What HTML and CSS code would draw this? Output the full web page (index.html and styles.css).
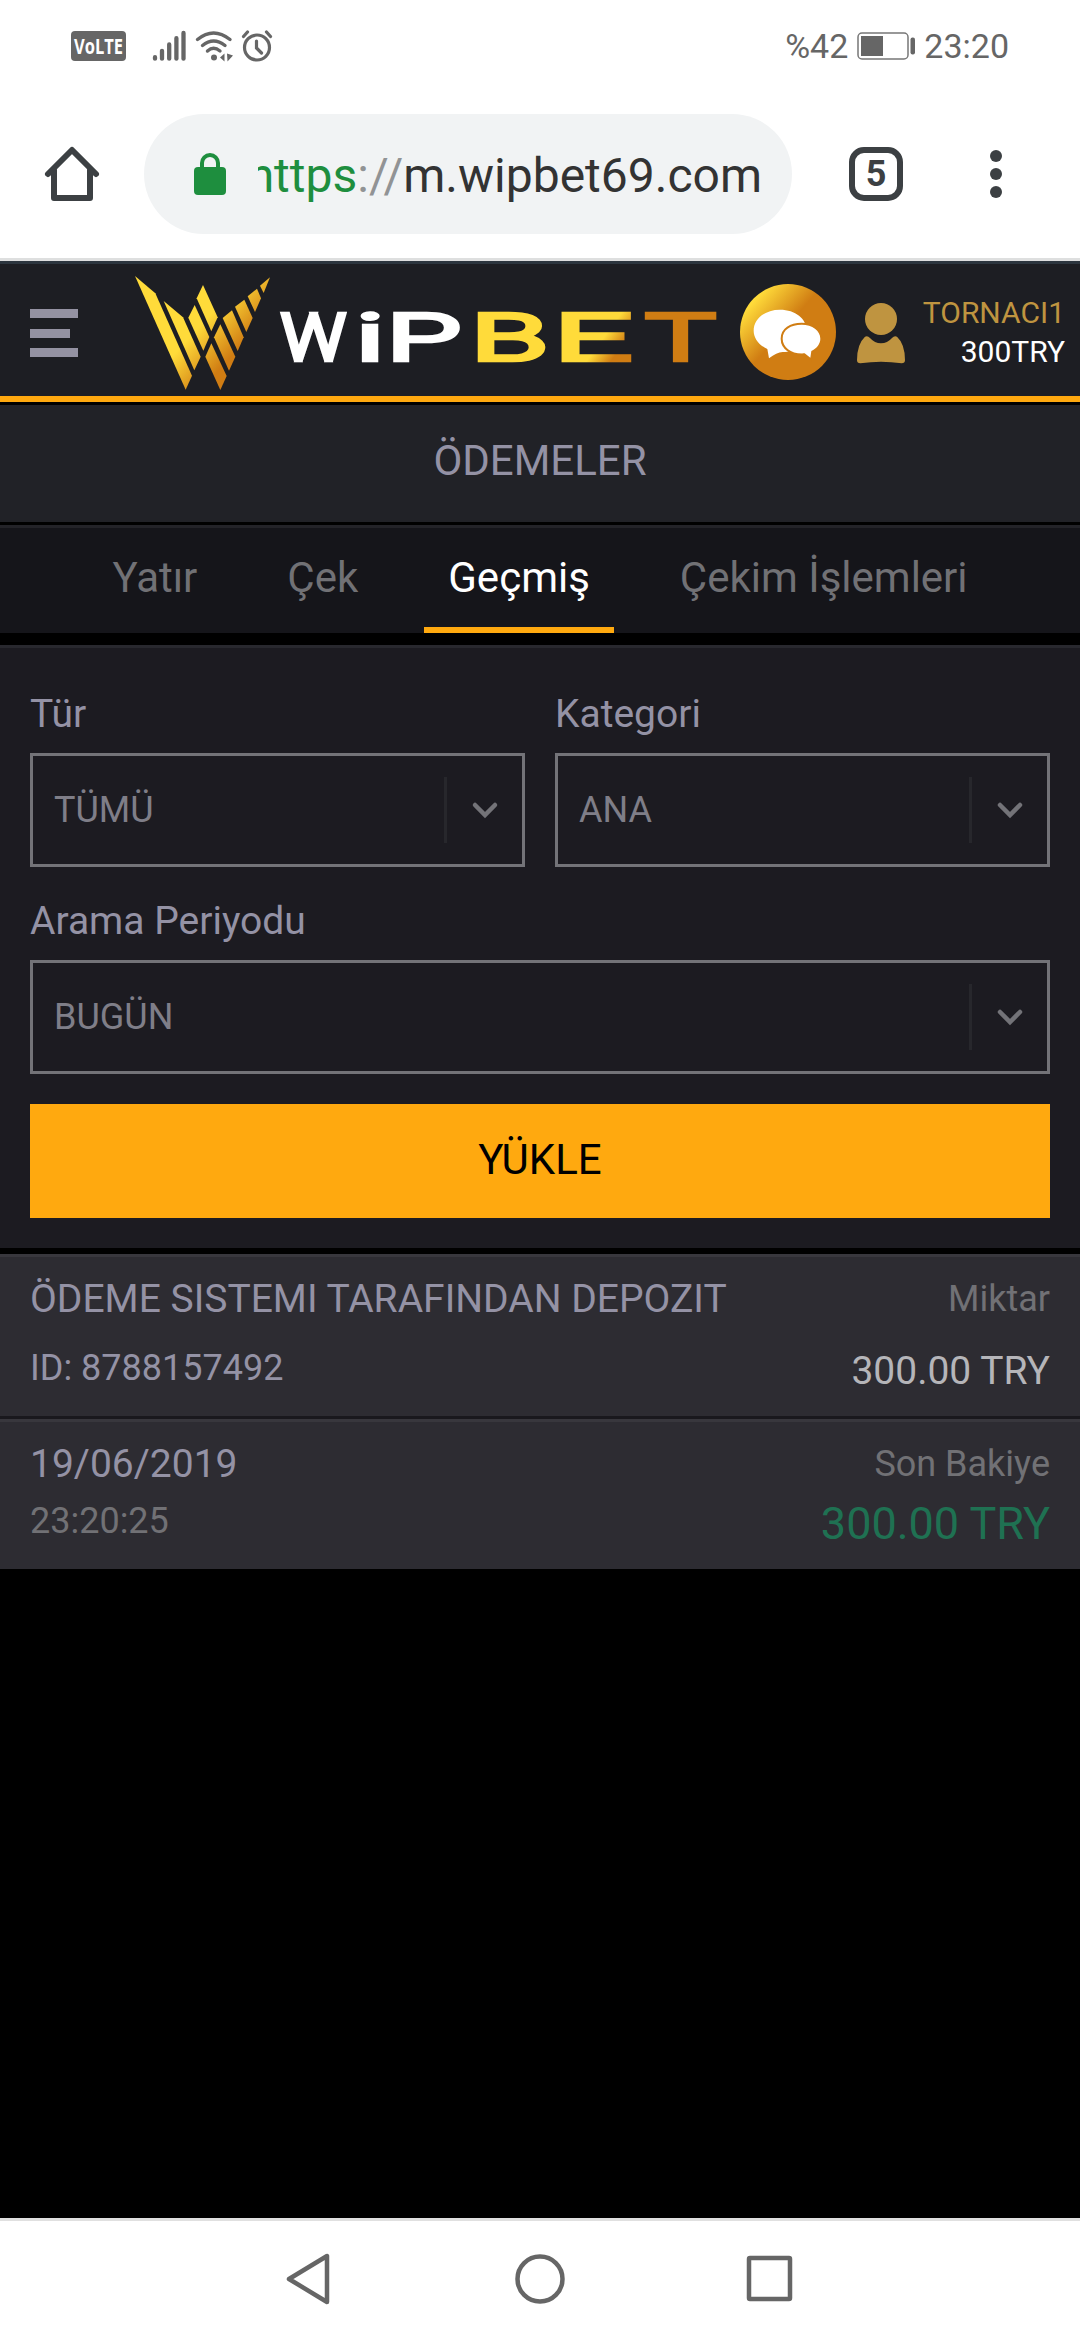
FILE: index.html
```html
<!DOCTYPE html>
<html lang="tr">
<head>
    <meta charset="UTF-8">
    <meta name="viewport" content="width=device-width, initial-scale=1.0">
    <title>Ödemeler</title>
    <link rel="stylesheet" href="styles.css">
</head>
<body>
    <div class="status-bar">
        <div class="status-left">
            <svg class="volte" width="55" height="30" viewBox="0 0 55 30">
                <rect width="55" height="30" rx="4" fill="#666"/>
                <text x="3" y="23" textLength="49" lengthAdjust="spacingAndGlyphs">VoLTE</text>
            </svg>
            <svg class="signal" width="35" height="32" viewBox="0 0 35 32" stroke="#666" stroke-width="4.3" stroke-linecap="round">
                <path d="M3 27.2v1.5M10 20.8v7.9M17.2 14.4v14.3M24.4 8.2v20.5M31.5 3v25.7"/>
            </svg>
            <svg class="wifi" width="38" height="32" viewBox="0 0 38 32" fill="none" stroke="#666" stroke-width="3.4" stroke-linecap="round">
                <path d="M2.5 9.5Q18.5-3.5 35 9.5M7.5 15.5Q18.5 6.5 30 15.5M12.5 21Q18.5 15.7 25 21"/>
                <circle cx="19" cy="27.5" r="3" fill="#666" stroke="none"/>
                <path d="M25 27.5l4.5-4v8zM32 23.5l6 2-5.5 6z" fill="#666" stroke="none"/>
            </svg>
            <svg class="alarm" width="32" height="32" viewBox="0 0 32 32" fill="none" stroke="#666" stroke-width="3.2" stroke-linecap="round">
                <circle cx="16" cy="17.5" r="12.5"/>
                <path d="M15.5 11v7l5 5M2.5 6.5l4-4.5M29.5 6.5l-4-4.5"/>
            </svg>
        </div>
        <div class="status-right">
            <span>%42</span>
            <svg width="58" height="28" viewBox="0 0 58 28">
                <rect x="1" y="1" width="50" height="26" rx="4" fill="none" stroke="#777" stroke-width="1.5"/>
                <rect x="4" y="4" width="22" height="20" fill="#666"/>
                <rect x="53.5" y="5.5" width="4.5" height="17" rx="2" fill="#666"/>
            </svg>
            <span>23:20</span>
        </div>
    </div>

    <div class="browser-bar">
        <svg class="home" width="54" height="54" viewBox="0 0 54 54" fill="none" stroke="#3c4043" stroke-width="6" stroke-linejoin="round" stroke-linecap="round">
            <path d="M3 27L27 3l24 24M9 23v28h36V23"/>
        </svg>
        <div class="url-box">
            <svg width="32" height="42" viewBox="0 0 32 42">
                <rect y="14" width="32" height="28" rx="4" fill="#1e8e3e"/>
                <path d="M8 16V10a8 8 0 0 1 16 0v6" fill="none" stroke="#1e8e3e" stroke-width="4"/>
            </svg>
            <div class="url"><span class="scheme">https</span><span class="slashes">://</span>m.wipbet69.com</div>
        </div>
        <div class="tab-count">5</div>
        <div class="dots"><i></i><i></i><i></i></div>
    </div>

    <header class="site-header">
        <div class="menu"><i></i><i class="short"></i><i></i></div>
        <svg class="logo" width="585" height="128" viewBox="405 39 1755 384">
            <defs>
                <linearGradient id="gold" gradientUnits="userSpaceOnUse" x1="550" y1="268" x2="646" y2="356">
                    <stop offset="0" stop-color="#ffdb3a"/>
                    <stop offset="1" stop-color="#d07d13"/>
                </linearGradient>
                <linearGradient id="gold-e" x1="0.3" y1="0.3" x2="1" y2="0.8">
                    <stop offset="0.45" stop-color="#ffdb3a"/>
                    <stop offset="0.75" stop-color="#d07d13"/>
                </linearGradient>
            </defs>
            <g fill="url(#gold)">
                <polygon points="405,63 466,115 576,362 557,404"/>
                <polygon points="491,138 549,187 602,305 583,346"/>
                <polygon points="584,150 628,246 610,287 565,188"/>
                <polygon points="609,90 653,187 634,229 590,130"/>
                <polygon points="634,265 680,363 661,405 616,305"/>
                <polygon points="661,208 706,305 687,347 642,247"/>
                <polygon points="696,166 731,247 713,288 668,189"/>
                <polygon points="733,134 758,189 739,231 705,155"/>
                <polygon points="771,101 783,130 765,171 743,124"/>
                <polygon points="810,67 791,114 780,92"/>
            </g>
            <g class="wordmark">
                <text x="843" y="316" textLength="194" lengthAdjust="spacingAndGlyphs" fill="#fff" stroke="#fff">W</text>
                <text x="1068" y="316" textLength="84" lengthAdjust="spacingAndGlyphs" fill="#fff" stroke="#fff">i</text>
                <text x="1160" y="316" textLength="222" lengthAdjust="spacingAndGlyphs" fill="#fff" stroke="#fff">P</text>
                <text x="1413" y="316" textLength="230" lengthAdjust="spacingAndGlyphs" fill="#ffdb3a" stroke="#ffdb3a">B</text>
                <text x="1663" y="316" textLength="231" lengthAdjust="spacingAndGlyphs" fill="url(#gold-e)" stroke="url(#gold-e)">E</text>
                <text x="1938" y="316" textLength="207" lengthAdjust="spacingAndGlyphs" fill="#d07d13" stroke="#d07d13">T</text>
            </g>
        </svg>
        <svg class="chat" width="96" height="96" viewBox="60 87 288 288">
            <defs>
                <linearGradient id="chat-gold" x1="0.12" y1="0.12" x2="0.55" y2="0.5">
                    <stop offset="0.1" stop-color="#ffdb3a"/>
                    <stop offset="0.85" stop-color="#d07d13"/>
                </linearGradient>
            </defs>
            <circle cx="204" cy="231" r="144" fill="url(#chat-gold)"/>
            <path d="M180 164c46 0 80 27 80 63s-30 64-72 64c-12 0-26 8-41 19l-5-28c-25-12-41-32-41-55 0-36 34-63 79-63z" fill="#fff"/>
            <path d="M245 209c32 0 56 18 56 42 0 16-11 29-27 37l-3 20-17-13c-39 3-66-17-66-44s24-42 57-42z" fill="#fff" stroke="#d07d13" stroke-width="12" paint-order="stroke"/>
        </svg>
        <svg class="person" width="48" height="60" viewBox="0 0 144 180" fill="#bf9440">
            <circle cx="72" cy="48" r="48"/>
            <path d="M24 101q8-4 15 4 14 16 33 16t33-16q7-8 15-4 24 22 24 71 0 9-10 9-31-5-62-5t-62 5q-10 0-10-9 0-49 24-71z"/>
        </svg>
        <div class="account">
            <div class="user-name">TORNACI1</div>
            <div class="user-balance">300TRY</div>
        </div>
    </header>

    <h1 class="page-title">ÖDEMELER</h1>

    <nav class="tabs">
        <a>Yatır</a>
        <a>Çek</a>
        <a class="active">Geçmiş</a>
        <a>Çekim İşlemleri</a>
    </nav>

    <section class="filters">
        <div class="filter-row">
            <div class="field">
                <label>Tür</label>
                <div class="select">TÜMÜ
                    <span class="arrow"><svg width="26" height="16" viewBox="0 0 26 16"><path d="M3 3l10 10L23 3"/></svg></span>
                </div>
            </div>
            <div class="field">
                <label>Kategori</label>
                <div class="select">ANA
                    <span class="arrow"><svg width="26" height="16" viewBox="0 0 26 16"><path d="M3 3l10 10L23 3"/></svg></span>
                </div>
            </div>
        </div>
        <div class="field">
            <label>Arama Periyodu</label>
            <div class="select">BUGÜN
                <span class="arrow"><svg width="26" height="16" viewBox="0 0 26 16"><path d="M3 3l10 10L23 3"/></svg></span>
            </div>
        </div>
        <div class="load-button">YÜKLE</div>
    </section>

    <section class="history">
        <div class="entry entry-main">
            <div>
                <div class="entry-title">ÖDEME SISTEMI TARAFINDAN DEPOZIT</div>
                <div class="entry-id">ID: 8788157492</div>
            </div>
            <div class="right">
                <div class="caption">Miktar</div>
                <div class="amount">300.00 TRY</div>
            </div>
        </div>
        <div class="entry entry-date">
            <div>
                <div class="entry-title">19/06/2019</div>
                <div class="time">23:20:25</div>
            </div>
            <div class="right">
                <div class="caption">Son Bakiye</div>
                <div class="balance">300.00 TRY</div>
            </div>
        </div>
    </section>

    <div class="nav-bar">
        <svg width="50" height="54" viewBox="0 0 50 54"><path d="M4 27L42 4v46z"/></svg>
        <svg width="50" height="54" viewBox="0 0 50 54"><circle cx="25" cy="27" r="22.5"/></svg>
        <svg width="50" height="54" viewBox="0 0 50 54"><rect x="4" y="6" width="41" height="41" rx="1"/></svg>
    </div>
</body>
</html>
```

FILE: styles.css
```css
* {
    box-sizing: border-box;
}
body {
    margin: 0;
    height: 2340px;
    display: flex;
    flex-direction: column;
    background: #000;
    font-family: Roboto, "Liberation Sans", sans-serif;
    overflow: hidden;
}
svg {
    display: block;
    flex: none;
    overflow: visible;
}

/* phone status bar */
.status-bar {
    height: 90px;
    padding: 2px 71px 0 71px;
    display: flex;
    justify-content: space-between;
    align-items: center;
    background: #fff;
    color: #666;
    font-size: 34px;
}
.status-left,
.status-right {
    display: flex;
    align-items: center;
}
.status-right {
    gap: 9px;
}
.volte text {
    font: bold 22px "Open Sans", sans-serif;
    fill: #fff;
}
.signal {
    margin-left: 26px;
}
.wifi {
    margin-left: 8px;
}
.alarm {
    margin-left: 8px;
}

/* browser toolbar */
.browser-bar {
    height: 171px;
    padding-left: 45px;
    display: flex;
    align-items: center;
    background: #fff;
    border-bottom: 3px solid #dedfdf;
}
.url-box {
    width: 648px;
    height: 120px;
    margin-left: 45px;
    padding: 0 30px 0 50px;
    border-radius: 60px;
    background: #f1f3f4;
    display: flex;
    align-items: center;
    justify-content: space-between;
}
.url {
    width: 504px;
    padding-top: 3px;
    display: flex;
    justify-content: flex-end;
    overflow: hidden;
    font-size: 48px;
    line-height: 60px;
    color: #333;
}
.scheme {
    color: #1e8e3e;
}
.slashes {
    color: #919395;
}
.tab-count {
    width: 54px;
    height: 54px;
    margin-left: 57px;
    border: 6px solid #3c4043;
    border-radius: 15px;
    color: #3c4043;
    font-size: 36px;
    font-weight: bold;
    line-height: 43px;
    text-align: center;
}
.dots {
    margin-left: 87px;
    display: flex;
    flex-direction: column;
    gap: 6px;
}
.dots i {
    width: 12px;
    height: 12px;
    border-radius: 50%;
    background: #3c4043;
}

/* site header */
.site-header {
    height: 141px;
    margin-bottom: 3px;
    padding: 4px 15px 0 30px;
    border-top: 3px solid #2c353e;
    border-bottom: 6px solid #ffa90f;
    display: flex;
    align-items: center;
    background: #1d1e23;
}
.menu {
    width: 48px;
    margin-top: 2px;
    display: flex;
    flex-direction: column;
    gap: 10.5px;
}
.menu i {
    height: 9px;
    background: #9492a2;
}
.menu .short {
    width: 40px;
}
.logo {
    margin-left: 57px;
}
.wordmark text {
    font: 300 193px Roboto, sans-serif;
    stroke-width: 14px;
}
.chat {
    margin-left: 20px;
}
.person {
    margin: 2px 0 0 21px;
}
.account {
    margin-left: auto;
    text-align: right;
    font-size: 30px;
    line-height: 39px;
}
.user-name {
    color: #bf9440;
}
.user-balance {
    color: #fff;
}

.page-title {
    margin: 0 0 3px;
    height: 117px;
    background: #212227;
    color: #9492a5;
    font-size: 42px;
    font-weight: normal;
    line-height: 111px;
    text-align: center;
}

.tabs {
    height: 108px;
    border-top: 3px solid #232328;
    background: #15151a;
    display: flex;
    justify-content: center;
    gap: 42px;
    margin-bottom: 12px;
}
.tabs a {
    padding: 0 24px;
    border-bottom: 6px solid transparent;
    color: #717175;
    font-size: 42px;
    line-height: 99px;
}
.tabs .active {
    color: #fff;
    border-bottom-color: #ffa90f;
}

/* filter form */
.filters {
    padding: 42px 30px 30px;
    border-top: 3px solid #28282e;
    background: #1c1b21;
    display: flex;
    flex-direction: column;
    gap: 30px;
    margin-bottom: 6px;
}
.filter-row {
    display: grid;
    grid-template-columns: 1fr 1fr;
    gap: 30px;
}
.field label {
    display: block;
    margin-bottom: 15px;
    color: #9492a5;
    font-size: 39px;
    line-height: 48px;
}
.select {
    height: 114px;
    padding-left: 21px;
    border: 3px solid #737378;
    display: flex;
    align-items: center;
    justify-content: space-between;
    color: #7f7e88;
    font-size: 36px;
}
.arrow {
    width: 78px;
    height: 66px;
    border-left: 3px solid #27272c;
    display: flex;
    align-items: center;
    justify-content: center;
}
.arrow path {
    fill: none;
    stroke: #737378;
    stroke-width: 4.5;
    stroke-linecap: round;
}
.load-button {
    height: 114px;
    background: #ffa90f;
    color: #000;
    font-size: 42px;
    line-height: 112px;
    text-align: center;
}

/* payment history */
.entry {
    padding: 18px 30px 21px;
    border-top: 3px solid #38373d;
    background: #2d2c32;
    display: flex;
    justify-content: space-between;
    line-height: 48px;
}
.entry-main {
    border-bottom: 3px solid #19181d;
}
.entry-main .entry-title,
.entry-main .caption {
    margin-bottom: 24px;
}
.entry-date .entry-title,
.entry-date .caption {
    margin-bottom: 12px;
}
.right {
    text-align: right;
}
.entry-title {
    color: #9492a5;
    font-size: 39px;
}
.entry-id {
    color: #9492a5;
    font-size: 36px;
    line-height: 42px;
}
.time {
    color: #717175;
    font-size: 36px;
    line-height: 42px;
}
.caption {
    color: #717175;
    font-size: 36px;
}
.amount {
    color: #b5b5b9;
    font-size: 39px;
}
.balance {
    color: #1f7152;
    font-size: 45px;
}

/* android navigation */
.nav-bar {
    height: 122px;
    margin-top: auto;
    padding-bottom: 3px;
    border-top: 3px solid #e0e0e0;
    background: #fff;
    display: flex;
    justify-content: center;
    align-items: center;
    gap: 180px;
}
.nav-bar svg {
    fill: none;
    stroke: #666;
    stroke-width: 4.5;
    stroke-linejoin: round;
}
```
